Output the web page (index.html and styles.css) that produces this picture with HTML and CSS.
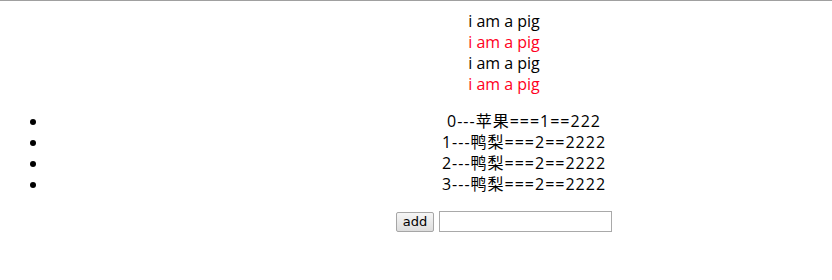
FILE: index.html
```html
<!DOCTYPE html>
<html lang="zh-CN">
<head>
    <meta charset="UTF-8">
    <title>vue demo</title>
    <link rel="stylesheet" href="styles.css">
</head>
<body>
    <div id="app">
        <div class="msg">i am a pig</div>
        <div class="msg red">i am a pig</div>
        <div class="msg">i am a pig</div>
        <div class="msg red">i am a pig</div>

        <ul class="fruits">
            <li>0---苹果===1==222</li>
            <li>1---鸭梨===2==2222</li>
            <li>2---鸭梨===2==2222</li>
            <li>3---鸭梨===2==2222</li>
        </ul>

        <div class="add-row">
            <button type="button">add</button>
            <input type="text">
        </div>
    </div>
</body>
</html>
```

FILE: styles.css
```css
html {
    overflow: hidden;
    border-top: 1px solid #a0a0a0;
}

body {
    margin: 8px;
    padding-top: 2px;
    width: 992px;
    font-family: "Open Sans", "Noto Sans CJK SC", sans-serif;
    font-size: 16px;
    line-height: 21px;
    color: #000;
    text-align: center;
}

.red {
    color: #ff0022;
}

.fruits {
    margin: 16px 0;
    padding-left: 40px;
}

.fruits li {
    letter-spacing: 1px;
}

.add-row {
    display: flex;
    justify-content: center;
    align-items: center;
    gap: 5px;
}

button {
    font-family: Tahoma, "DejaVu Sans", sans-serif;
    font-size: 13px;
    width: 38px;
    height: 20px;
    padding: 0;
    background: linear-gradient(#f6f6f6, #dddddd);
    border: 1px solid #a6a6a6;
    border-radius: 2px;
    color: #000;
}

input[type="text"] {
    width: 173px;
    height: 21px;
    box-sizing: border-box;
    border: 1px solid #a9a9a9;
    padding: 1px 2px;
    margin: 0;
}
```
